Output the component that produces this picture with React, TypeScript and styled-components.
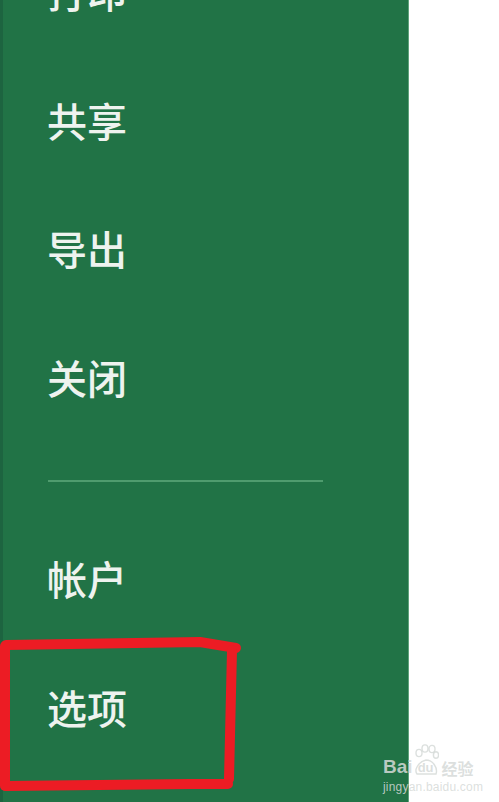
import React from "react";
import styled, { createGlobalStyle } from "styled-components";

const GlobalStyle = createGlobalStyle`
  html, body {
    margin: 0;
    padding: 0;
    background: #ffffff;
    overflow: hidden;
  }
  #root {
    width: 499px;
    height: 802px;
  }
`;

const menuTop = ["打印", "共享", "导出", "关闭"];
const menuBottom = ["帐户", "选项"];

const Page = styled.div`
  position: relative;
  width: 499px;
  height: 802px;
  display: flex;
  background: #ffffff;
  overflow: hidden;
`;

const Sidebar = styled.nav`
  width: 409px;
  height: 100%;
  background: #217346;
  border-left: 3px solid #1d6440;
  border-right: 1px solid #5fa37c;
  box-sizing: border-box;
  display: flex;
  flex-direction: column;
`;

const MenuList = styled.ul<{ offset: number }>`
  list-style: none;
  margin: ${props => props.offset}px 0 0 0;
  padding: 0;
  display: flex;
  flex-direction: column;
`;

const MenuItem = styled.li<{ h: number }>`
  height: ${props => props.h}px;
  display: flex;
  align-items: center;
  padding-left: 44px;
  font-family: "Noto Sans CJK SC", "Noto Sans", sans-serif;
  font-size: 40px;
  font-weight: 500;
  line-height: 1;
  color: #eef3ef;
`;

const Divider = styled.hr`
  width: 275px;
  height: 2px;
  margin: 39px 0 31px 45px;
  border: none;
  background: #4f9c6e;
`;

const Highlight = styled.svg`
  position: absolute;
  left: 0;
  top: 0;
  width: 499px;
  height: 802px;
  pointer-events: none;
`;

const Watermark = styled.div`
  position: absolute;
  left: 383px;
  top: 744px;
  display: flex;
  flex-direction: column;
  color: rgba(214, 218, 216, 0.85);
  font-family: "Liberation Sans", Arial, sans-serif;
  pointer-events: none;
`;

const LogoRow = styled.div`
  display: flex;
  align-items: flex-end;
  height: 32px;
`;

const LogoWord = styled.span`
  font-size: 19px;
  font-weight: 700;
  line-height: 1;
`;

const Paw = styled.span`
  position: relative;
  width: 26px;
  height: 32px;
  display: flex;
  align-items: flex-end;
  justify-content: center;
`;

const PawText = styled.span`
  font-size: 13px;
  font-weight: 700;
  line-height: 1;
  margin-bottom: 2px;
`;

const PawToes = styled.svg`
  position: absolute;
  left: 0;
  top: 0;
`;

const LogoCjk = styled.span`
  font-family: "Noto Sans CJK SC", sans-serif;
  font-size: 16px;
  font-weight: 700;
  line-height: 1;
  margin-left: 3px;
`;

const LogoUrl = styled.span`
  font-size: 12px;
  margin-top: 4px;
  letter-spacing: 0.2px;
`;

export default function App() {
  return (
    <>
      <GlobalStyle />
      <Page>
        <Sidebar>
          <MenuList offset={-73}>
            {menuTop.map(label => (
              <MenuItem key={label} h={128.5}>{label}</MenuItem>
            ))}
          </MenuList>
          <Divider />
          <MenuList offset={0}>
            {menuBottom.map(label => (
              <MenuItem key={label} h={129}>{label}</MenuItem>
            ))}
          </MenuList>
        </Sidebar>

        <Highlight viewBox="0 0 499 802">
          <g fill="none" stroke="#ec1c24" strokeWidth={10} strokeLinecap="round" strokeLinejoin="round">
            <path d="M6 645 L200 642 L236 648" />
            <path d="M232 650 L229 779" />
            <path d="M228 784 L190 784 L6 786" />
            <path d="M5 786 L5 646" />
          </g>
        </Highlight>

        <Watermark>
          <LogoRow>
            <LogoWord>Bai</LogoWord>
            <Paw>
              <PawToes width="26" height="32" viewBox="0 0 26 32">
                <g fill="none" stroke="currentColor" strokeWidth={1.4}>
                  <ellipse cx="6" cy="9" rx="3" ry="3.6" />
                  <ellipse cx="12" cy="4.5" rx="3" ry="3.6" />
                  <ellipse cx="19" cy="5" rx="3" ry="3.6" />
                  <ellipse cx="23" cy="11" rx="2.6" ry="3.2" />
                  <path d="M4 30 C1 26 5 18 13 16 C20 16 25 24 23 30 Z" />
                </g>
              </PawToes>
              <PawText>du</PawText>
            </Paw>
            <LogoCjk>经验</LogoCjk>
          </LogoRow>
          <LogoUrl>jingyan.baidu.com</LogoUrl>
        </Watermark>
      </Page>
    </>
  );
}
